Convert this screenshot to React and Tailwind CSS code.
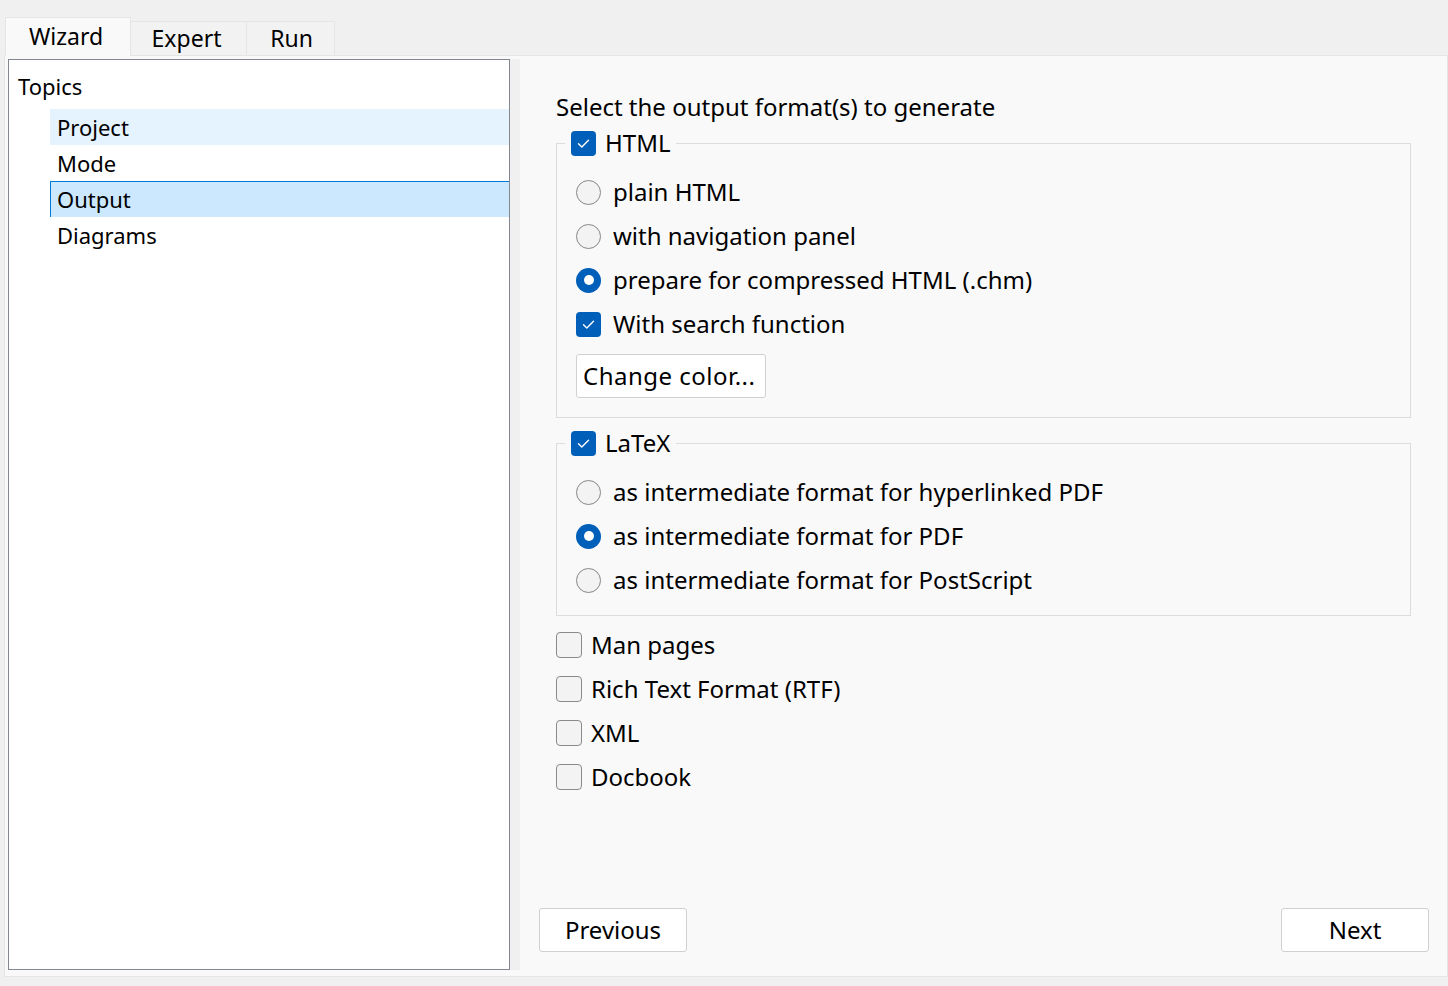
import React from "react";

const FONT = { fontFamily: '"Noto Sans", "Open Sans", sans-serif' };

function CheckBox({ checked }) {
  if (checked) {
    return (
      <span className="flex h-[25px] w-[25px] shrink-0 items-center justify-center rounded-[4px] bg-[#005fb8]">
        <svg width="25" height="25" viewBox="0 0 25 25">
          <path d="M7.5 12.8 L10.8 16 L17.5 9.3" fill="none" stroke="#ffffff" strokeWidth="1.4" strokeLinecap="round" strokeLinejoin="round" />
        </svg>
      </span>
    );
  }
  return <span className="block h-[26px] w-[26px] shrink-0 rounded-[4px] border border-[#8a8a8a] bg-[#f3f3f3]" />;
}

function Radio({ checked }) {
  if (checked) {
    return (
      <span className="flex h-[25px] w-[25px] shrink-0 items-center justify-center rounded-full bg-[#005fb8]">
        <span className="block h-[10px] w-[10px] rounded-full bg-white" />
      </span>
    );
  }
  return <span className="block h-[25px] w-[25px] shrink-0 rounded-full border border-[#868686] bg-[#f3f3f3]" />;
}

function Row({ children, label }) {
  return (
    <div className="flex h-[44px] items-center gap-[12px] text-[24px] text-black">
      {children}
      <span className="leading-none">{label}</span>
    </div>
  );
}

function Group({ title, children, className }) {
  return (
    <fieldset className={"border border-[#dcdcdc] " + className}>
      <legend className="ml-[8px] px-[6px]">
        <span className="flex h-[26px] items-center gap-[9px] text-[24px] leading-none text-black">
          <CheckBox checked />
          <span>{title}</span>
        </span>
      </legend>
      {children}
    </fieldset>
  );
}

export default function App() {
  return (
    <div className="flex h-[986px] w-[1448px] flex-col bg-[#f0f0f0]" style={FONT}>
      {/* Tab bar */}
      <div className="flex h-[55px] items-end pl-[5px]">
        <div className="relative z-10 -mb-px flex h-[39px] w-[126px] items-center justify-center border border-b-0 border-[#e5e5e5] bg-[#f9f9f9] pb-[2px] pr-[4px] text-[23px] text-black">
          Wizard
        </div>
        <div className="flex h-[34px] w-[116px] items-center justify-center border border-l-0 border-b-0 border-[#e5e5e5] bg-[#f2f2f2] pr-[4px] text-[23px] text-black">
          Expert
        </div>
        <div className="flex h-[34px] w-[88px] items-center justify-center border border-l-0 border-b-0 border-[#e5e5e5] bg-[#f2f2f2] pl-[2px] text-[23px] text-black">
          Run
        </div>
      </div>

      {/* Pane */}
      <div className="ml-[4px] mb-[9px] flex flex-1 border border-[#e5e5e5] bg-[#f9f9f9] pt-[3px] pb-[6px] pl-[3px]">
        {/* Tree */}
        <div className="w-[502px] shrink-0 border border-[#828790] bg-white">
          <div className="flex h-[49px] items-center pl-[9px] pt-[3px] text-[22px] text-black">Topics</div>
          <div className="ml-[41px] flex h-[36px] items-center bg-[#e5f3ff] pl-[7px] text-[22px] text-black">Project</div>
          <div className="ml-[41px] flex h-[36px] items-center pl-[7px] text-[22px] text-black">Mode</div>
          <div className="ml-[41px] flex h-[36px] items-center border-t border-l border-[#0078d7] bg-[#cce8ff] pl-[6px] text-[22px] text-black">Output</div>
          <div className="ml-[41px] flex h-[36px] items-center pl-[7px] text-[22px] text-black">Diagrams</div>
        </div>

        {/* Splitter */}
        <div className="w-[10px] shrink-0 bg-[#f0f0f0]" />

        {/* Right panel */}
        <div className="flex flex-1 flex-col pl-[36px] pr-[36px] pt-[33px]">
          <div className="flex h-[30px] items-center text-[24px] text-black">Select the output format(s) to generate</div>

          <Group title="HTML" className="mt-[8px]">
            <div className="pl-[19px] pr-[19px] pb-[19px] pt-[14px]">
              <Row label="plain HTML"><Radio /></Row>
              <Row label="with navigation panel"><Radio /></Row>
              <Row label="prepare for compressed HTML (.chm)"><Radio checked /></Row>
              <Row label="With search function"><CheckBox checked /></Row>
              <div className="pt-[8px]">
                <button className="flex h-[44px] w-[190px] items-center rounded-[3px] border border-[#d0d0d0] bg-white pl-[6px] text-[24px] tracking-[0.5px] text-black">
                  Change color...
                </button>
              </div>
            </div>
          </Group>

          <Group title="LaTeX" className="mt-[12px]">
            <div className="pl-[19px] pr-[19px] pb-[13px] pt-[14px]">
              <Row label="as intermediate format for hyperlinked PDF"><Radio /></Row>
              <Row label="as intermediate format for PDF"><Radio checked /></Row>
              <Row label="as intermediate format for PostScript"><Radio /></Row>
            </div>
          </Group>

          <div className="pt-[7px]">
            <div className="flex h-[44px] items-center gap-[9px] text-[24px] text-black"><CheckBox /><span>Man pages</span></div>
            <div className="flex h-[44px] items-center gap-[9px] text-[24px] text-black"><CheckBox /><span>Rich Text Format (RTF)</span></div>
            <div className="flex h-[44px] items-center gap-[9px] text-[24px] text-black"><CheckBox /><span>XML</span></div>
            <div className="flex h-[44px] items-center gap-[9px] text-[24px] text-black"><CheckBox /><span>Docbook</span></div>
          </div>

          <div className="flex-1" />

          <div className="-ml-[17px] -mr-[18px] mb-[18px] flex justify-between">
            <button className="flex h-[44px] w-[148px] items-center justify-center rounded-[3px] border border-[#d0d0d0] bg-white text-[24px] text-black">Previous</button>
            <button className="flex h-[44px] w-[148px] items-center justify-center rounded-[3px] border border-[#d0d0d0] bg-white text-[24px] text-black">Next</button>
          </div>
        </div>
      </div>
    </div>
  );
}
